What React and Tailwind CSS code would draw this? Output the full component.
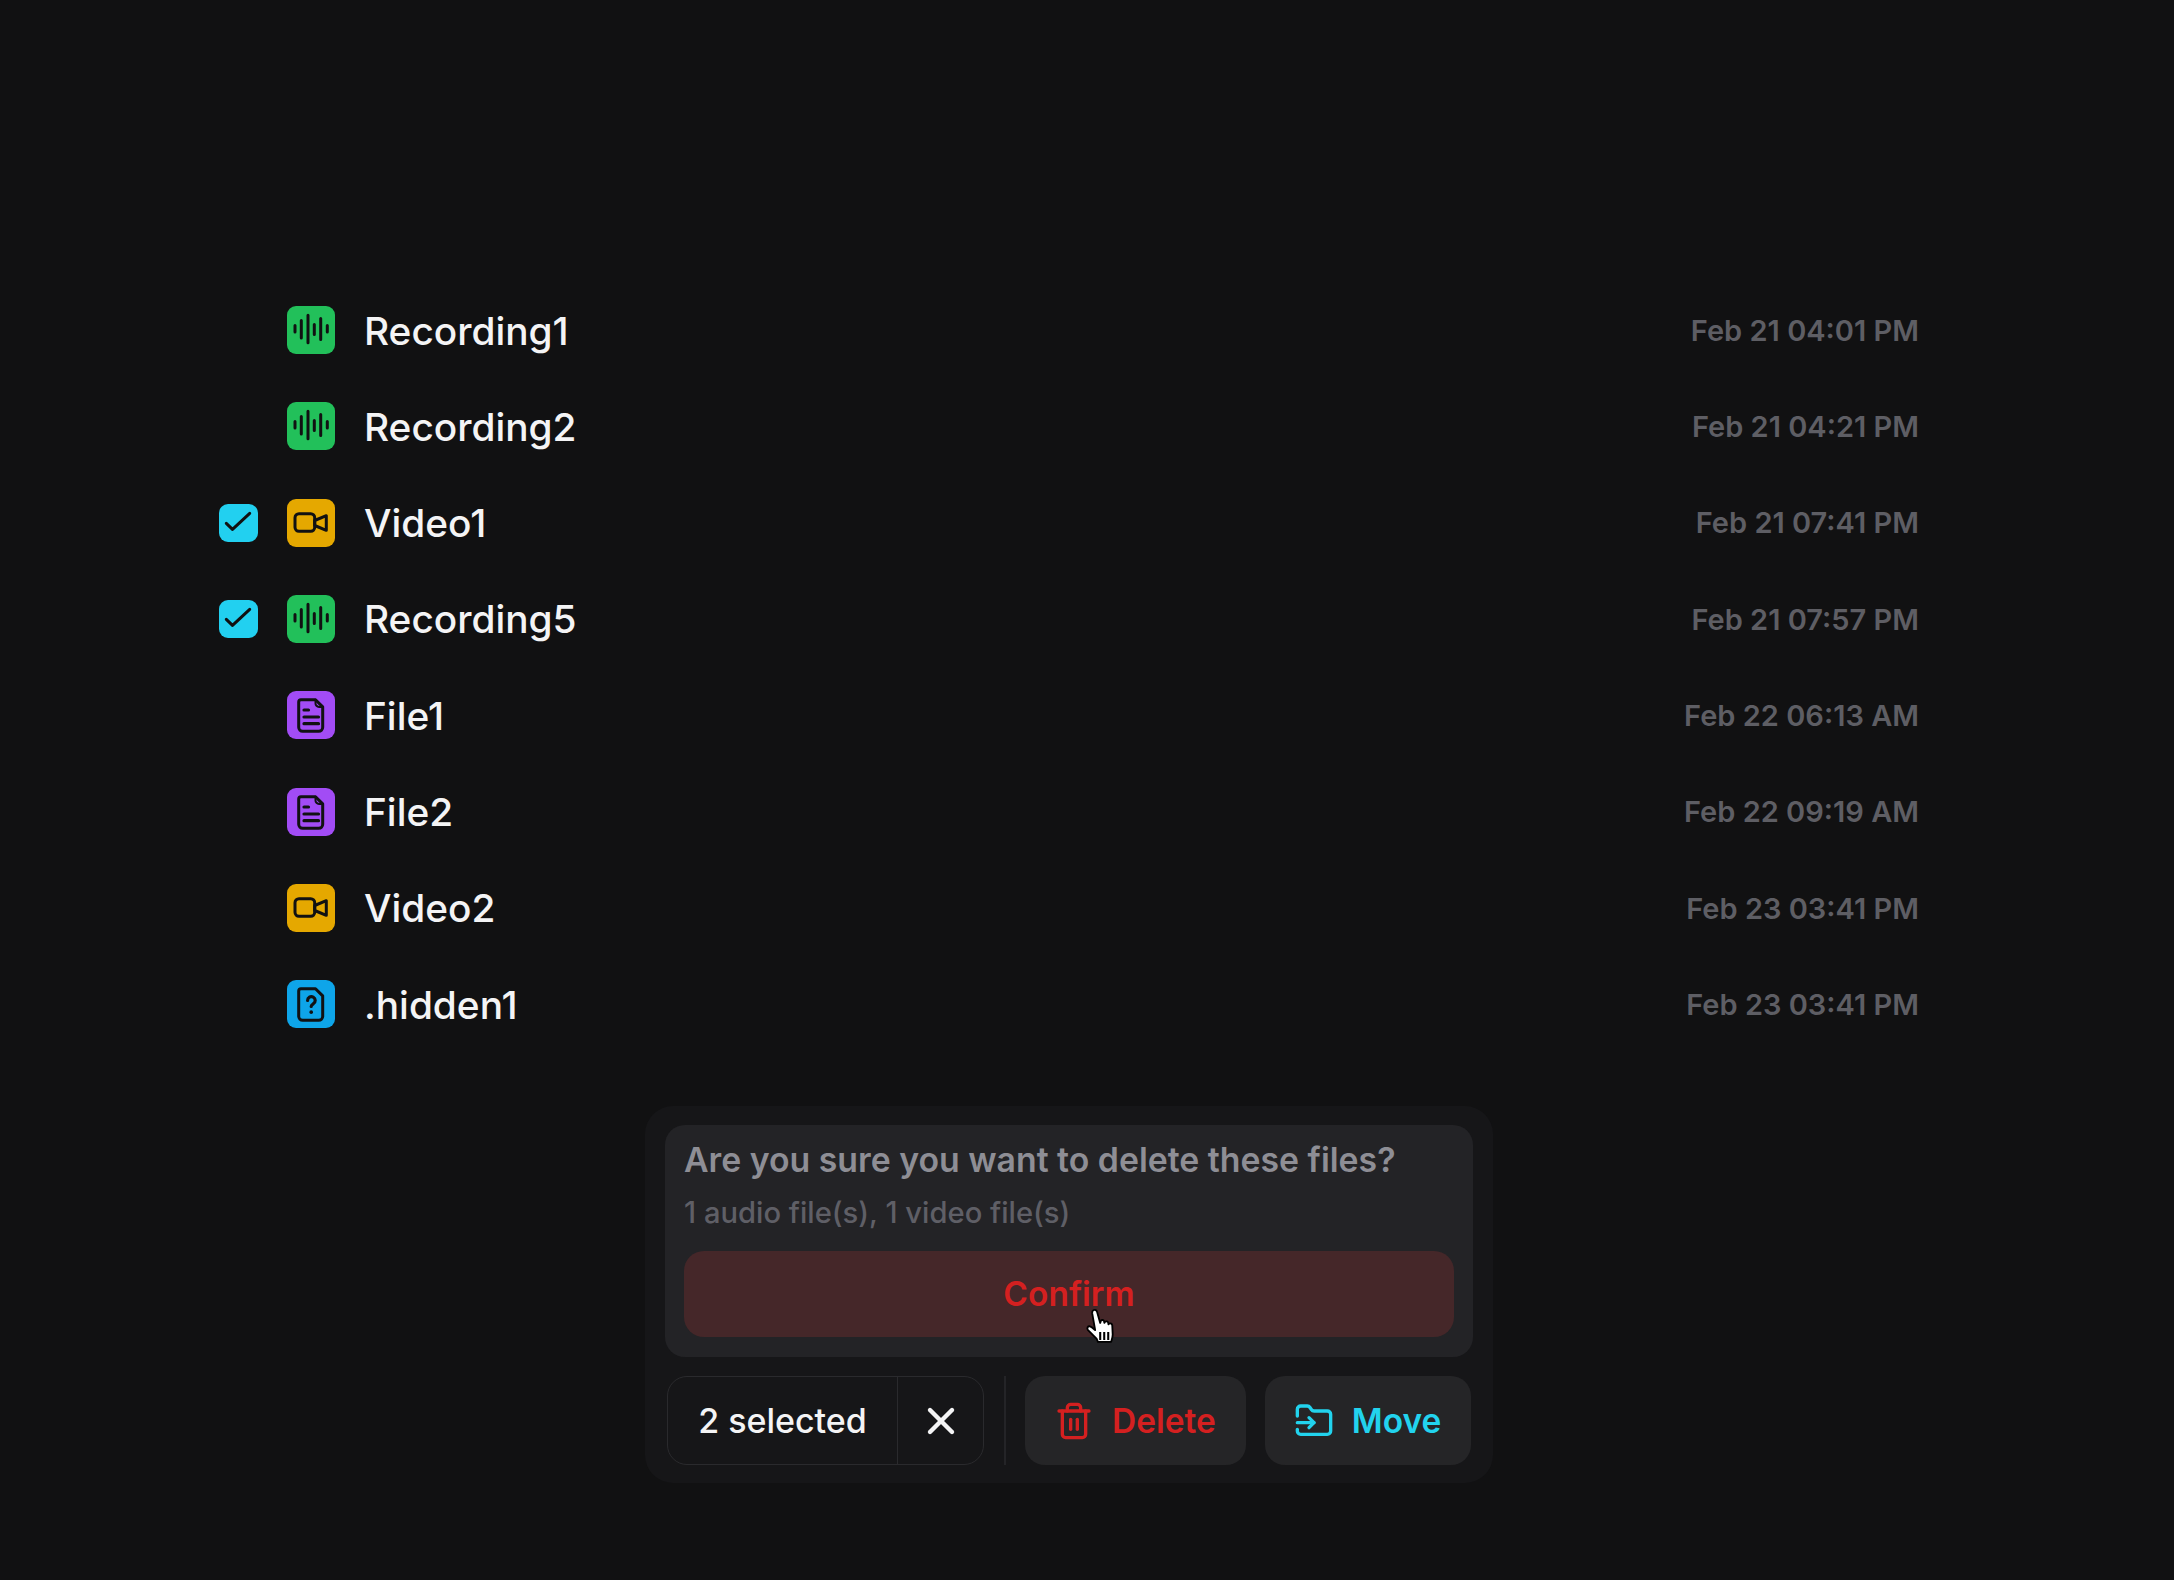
import React from 'react';
import { Trash2, FolderInput, X } from 'lucide-react';

const FILES = [
    { name: 'Recording1', type: 'audio', date: 'Feb 21 04:01 PM' },
    { name: 'Recording2', type: 'audio', date: 'Feb 21 04:21 PM' },
    { name: 'Video1', type: 'video', date: 'Feb 21 07:41 PM', checked: true },
    { name: 'Recording5', type: 'audio', date: 'Feb 21 07:57 PM', checked: true },
    { name: 'File1', type: 'file', date: 'Feb 22 06:13 AM' },
    { name: 'File2', type: 'file', date: 'Feb 22 09:19 AM' },
    { name: 'Video2', type: 'video', date: 'Feb 23 03:41 PM' },
    { name: '.hidden1', type: 'hidden', date: 'Feb 23 03:41 PM' },
];

const ICON_BG = {
    audio: 'bg-[#22c05a]',
    video: 'bg-[#e5a800]',
    file: 'bg-[#a24cf5]',
    hidden: 'bg-[#0ea5e9]',
};

const FILE_OUTLINE = 'M14 8.7h14.5l7.2 7.2v20.4a4 4 0 0 1-4 4H15.7a4 4 0 0 1-4-4V11a2.3 2.3 0 0 1 2.3-2.3z';

const ICON_PATHS = {
    audio: <path d="M8 19.6v6.4M14.3 14.6v17.4M21 9.3v27.4M27.3 18.6v10M33.7 12.6v20.8M40.3 19.6v6.4" />,
    video: (
        <>
            <rect x="8" y="14.7" width="19.7" height="17.6" rx="4" />
            <path d="M27.7 21.5l11.6-4.8v14.6l-11.6-4.8z" />
        </>
    ),
    file: (
        <>
            <path d={FILE_OUTLINE} />
            <path d="M28.5 8.7v3.5a3.5 3.5 0 0 0 3.5 3.7h3.7" strokeWidth="2" />
            <path d="M17 19h4.5M17 26h14.5M17 32.7h14.5" strokeWidth="3.2" />
        </>
    ),
    hidden: (
        <>
            <path d={FILE_OUTLINE} />
            <path d="M20.6 20.5a3.8 3.8 0 1 1 5.8 3.2c-1.2.8-2.2 1.4-2.2 2.8" strokeWidth="3.2" />
            <path d="M24.2 32v.3" strokeWidth="3.6" />
        </>
    ),
};

const FileIcon = ({ type }) => (
    <div className={`w-12 h-12 shrink-0 rounded-[9px] ${ICON_BG[type]}`}>
        <svg width="48" height="48" viewBox="0 0 48 48" fill="none" stroke="#111112" strokeWidth="3" strokeLinecap="round" strokeLinejoin="round">
            {ICON_PATHS[type]}
        </svg>
    </div>
);

const HandCursor = () => (
    <svg className="absolute left-[420px] top-[183px]" width="35" height="39" viewBox="0 0 30 34" stroke="#000" strokeWidth="1.6" strokeLinejoin="round">
        <path fill="#fff" d="M7 2c1.5-1 3 0 3.3 1.5L13 13l.6-2c1-1 2.4-.6 2.8.6l.2 1.4.6-1c1-.8 2.5-.3 2.8 1l.2 1.2.6-.6c1.2-.6 2.6.2 2.7 1.6l.4 8c0 2.5-.8 4.2-1.4 6.3H11l-1-2.5L2.2 19c-1-1.5 0-3.4 1.8-3 1.5.3 3 1.8 4.6 3.3L6 4.5C5.9 3.4 6.2 2.5 7 2z" />
        <path fill="none" strokeWidth="1.8" d="M13 21v7M16.5 21v7M20 21v7" />
    </svg>
);

export default function App() {
    return (
        <div className="min-h-[1580px] bg-[#111112] font-['Inter',sans-serif] pt-[282px] antialiased">
            {/* File list */}
            <div className="ml-[219px] w-[1700px]">
                {FILES.map((f) => (
                    <div key={f.name} className="h-[96.3px] flex items-center">
                        <div className="w-[68px] shrink-0">
                            {f.checked && (
                                <div className="w-[39px] h-[38px] rounded-[9px] bg-[#22d0f0]">
                                    <svg width="39" height="38" viewBox="0 0 39 38" fill="none" stroke="#111112" strokeWidth="3" strokeLinecap="round" strokeLinejoin="round">
                                        <path d="M7.3 19.3l6.2 6L30.7 9.3" />
                                    </svg>
                                </div>
                            )}
                        </div>
                        <FileIcon type={f.type} />
                        <span className="ml-[29px] pt-px text-[38.8px] font-[550] text-[#f4f4f5] flex-1">{f.name}</span>
                        <span className="pt-px text-[29px] font-semibold text-[#5e5e64]">{f.date}</span>
                    </div>
                ))}
            </div>

            {/* Action bar */}
            <div className="mt-[54px] ml-[645px] w-[848px] h-[377px] rounded-[28px] bg-[#161618] px-5 pt-[19px]">
                <div className="relative rounded-[20px] bg-[#232326] h-[232px] px-[19px] pt-[15px]">
                    <p className="text-[33.8px] font-semibold text-[#8e8e95] leading-[40px] whitespace-nowrap">Are you sure you want to delete these files?</p>
                    <p className="mt-[15px] text-[29.2px] font-medium text-[#5f5f66] leading-[36px] whitespace-nowrap">1 audio file(s), 1 video file(s)</p>
                    <button className="mt-[20px] w-full h-[86px] rounded-[20px] bg-[#452729] text-[#d42020] text-[33.5px] font-semibold">Confirm</button>
                    <HandCursor />
                </div>
                <div className="flex mt-[19px] h-[89px] pl-[2px]">
                    <div className="h-full w-[317px] flex items-center rounded-[20px] border-[1.5px] border-[#2a2a2d]">
                        <span className="flex-1 text-center text-[34px] font-medium text-[#f4f4f5]">2 selected</span>
                        <div className="w-[86px] h-full border-l-[1.5px] border-[#2a2a2d] flex items-center justify-center text-[#f4f4f5]">
                            <X size={44} strokeWidth={2.4} />
                        </div>
                    </div>
                    <div className="w-[1.5px] h-full bg-[#242427] ml-5 mr-[19px]" />
                    <button className="h-full w-[221px] rounded-[20px] bg-[#252527] flex items-center justify-center gap-[18px] text-[#d42020] text-[33.5px] font-semibold">
                        <Trash2 size={40} strokeWidth={2} />Delete
                    </button>
                    <button className="ml-[19px] h-full w-[206px] rounded-[20px] bg-[#252527] flex items-center justify-center gap-[18px] text-[#22d3ee] text-[33.5px] font-semibold">
                        <FolderInput size={40} strokeWidth={2} />Move
                    </button>
                </div>
            </div>
        </div>
    );
}
